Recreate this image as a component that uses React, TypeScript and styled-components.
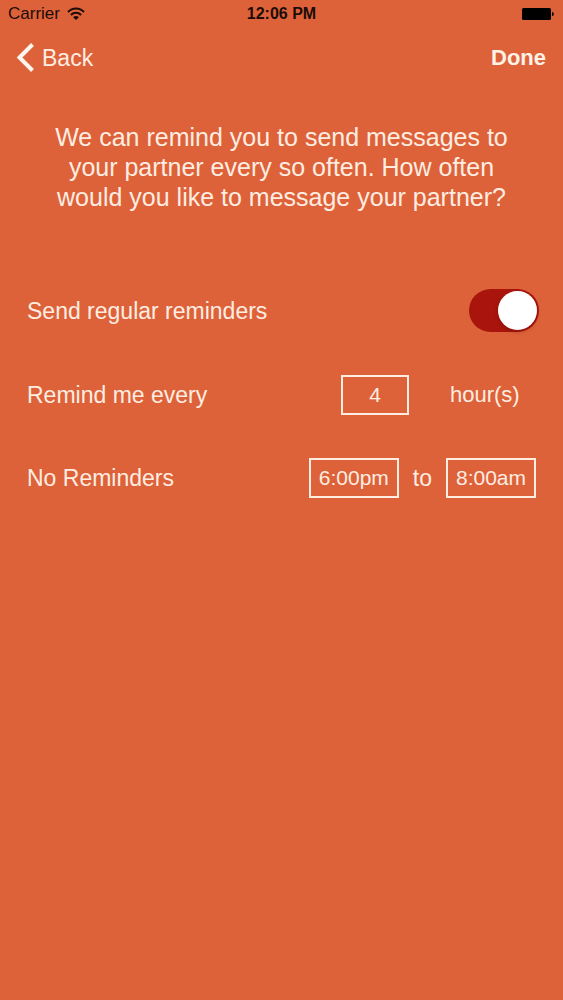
import React, { useState } from "react";
import styled, { createGlobalStyle } from "styled-components";

const ink = "#ffede2";
const background = "#dd6239";

const GlobalStyle = createGlobalStyle`
  * { box-sizing: border-box; }
  body {
    margin: 0;
    background: ${background};
    color: ${ink};
    font-family: "Liberation Sans", Arial, sans-serif;
  }
`;

const Screen = styled.div`
  min-height: 100vh;
  background: ${background};
`;

const StatusBar = styled.header`
  display: grid;
  grid-template-columns: 1fr auto 1fr;
  align-items: center;
  height: 28px;
  padding: 0 8px;
  color: #1c0c07;
`;

const Carrier = styled.div`
  display: flex;
  align-items: center;
  gap: 7px;
  font-size: 17px;
`;

const Clock = styled.time`
  font-size: 16px;
  font-weight: 700;
`;

const Battery = styled.svg`
  justify-self: end;
`;

const NavBar = styled.nav`
  display: flex;
  align-items: center;
  justify-content: space-between;
  height: 60px;
  padding: 0 17px 0 16px;
`;

const NavButton = styled.button<{ $strong?: boolean }>`
  display: flex;
  align-items: center;
  gap: 7px;
  padding: 0;
  border: 0;
  background: none;
  color: ${({ $strong }) => ($strong ? "#fff3e8" : ink)};
  font: inherit;
  font-size: ${({ $strong }) => ($strong ? 22 : 23)}px;
  font-weight: ${({ $strong }) => ($strong ? 700 : 400)};
  line-height: 28px;
  cursor: pointer;
`;

const Intro = styled.p`
  max-width: 476px;
  margin: 34px auto 0;
  font-size: 25px;
  line-height: 30px;
  text-align: center;
`;

const Form = styled.form`
  display: flex;
  flex-direction: column;
  gap: 43px;
  padding: 77px 27px 0;
`;

const Row = styled.div`
  display: flex;
  align-items: center;
  justify-content: space-between;
  min-height: 40px;
  font-size: 23px;
  line-height: 28px;
`;

const Controls = styled.div<{ $gap: number }>`
  display: flex;
  align-items: center;
  gap: ${({ $gap }) => $gap}px;
`;

const Unit = styled.span`
  min-width: 86px;
  font-size: 22px;
`;

const Field = styled.input<{ $width: number }>`
  width: ${({ $width }) => $width}px;
  height: 40px;
  padding: 0;
  border: 2px solid ${ink};
  border-radius: 0;
  outline: 0;
  background: transparent;
  color: ${ink};
  font: inherit;
  font-size: 21px;
  text-align: center;
`;

const Switch = styled.input`
  appearance: none;
  display: flex;
  align-items: center;
  width: 70px;
  height: 43px;
  margin: 0 -3px 0 0;
  padding: 2px;
  border-radius: 22px;
  background: #c98067;
  cursor: pointer;

  &::before {
    content: "";
    width: 39px;
    height: 39px;
    border-radius: 50%;
    background: #fff;
    box-shadow: 0 2px 4px rgba(60, 0, 0, 0.25);
  }

  &:checked {
    justify-content: flex-end;
    background: #a9150c;
  }
`;

export default function App() {
  const [enabled, setEnabled] = useState(true);
  const [hours, setHours] = useState("4");
  const [from, setFrom] = useState("6:00pm");
  const [until, setUntil] = useState("8:00am");

  return (
    <Screen>
      <GlobalStyle />
      <StatusBar>
        <Carrier>
          Carrier
          <svg width="18" height="14" viewBox="0 0 18 14" fill="none" stroke="currentColor" strokeWidth="2" aria-label="Wi-Fi">
            <path d="M1 5C5.4 .3 12.6 .3 17 5" />
            <path d="M3.9 8c2.9-2.9 7.3-2.9 10.2 0" />
            <path d="M9 13 6.1 10.2c1.6-1.5 4.2-1.5 5.8 0Z" fill="currentColor" stroke="none" />
          </svg>
        </Carrier>
        <Clock>12:06 PM</Clock>
        <Battery width="34" height="14" viewBox="0 0 34 14" aria-label="Battery full">
          <rect x="1" y="1" width="29" height="12" rx="1.5" fill="#000" />
          <path d="M31 5c2.4 0 2.4 4 0 4Z" fill="#000" />
        </Battery>
      </StatusBar>
      <NavBar>
        <NavButton type="button">
          <svg width="19" height="30" viewBox="0 0 19 30" fill="none" stroke="#fff6ee" strokeWidth="4" aria-hidden="true">
            <path d="M16.5 1.5 3.5 14.5l13 13" />
          </svg>
          Back
        </NavButton>
        <NavButton type="button" $strong>Done</NavButton>
      </NavBar>
      <main>
        <Intro>
          We can remind you to send messages to your partner every so often. How often would you like to message your partner?
        </Intro>
        <Form onSubmit={(e) => e.preventDefault()}>
          <Row>
            <label htmlFor="enabled">Send regular reminders</label>
            <Switch id="enabled" type="checkbox" role="switch" checked={enabled} onChange={(e) => setEnabled(e.target.checked)} />
          </Row>
          <Row>
            <label htmlFor="hours">Remind me every</label>
            <Controls $gap={41}>
              <Field id="hours" $width={68} inputMode="numeric" value={hours} onChange={(e) => setHours(e.target.value)} />
              <Unit>hour(s)</Unit>
            </Controls>
          </Row>
          <Row>
            <label htmlFor="from">No Reminders</label>
            <Controls $gap={14}>
              <Field id="from" $width={90} value={from} onChange={(e) => setFrom(e.target.value)} />
              <label htmlFor="until">to</label>
              <Field id="until" $width={90} value={until} onChange={(e) => setUntil(e.target.value)} />
            </Controls>
          </Row>
        </Form>
      </main>
    </Screen>
  );
}
